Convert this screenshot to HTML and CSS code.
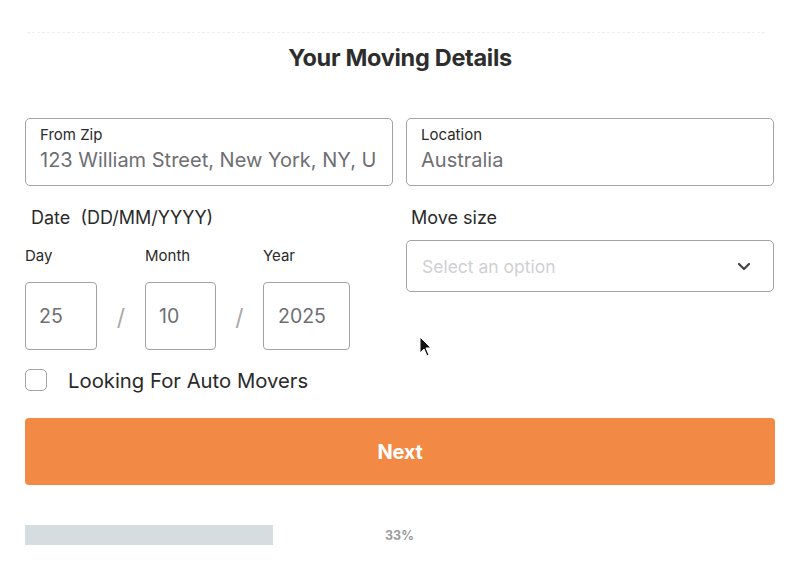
FILE: index.html
```html
<!DOCTYPE html>
<html>
<head>
<meta charset="utf-8">
<link rel="stylesheet" href="styles.css">
</head>
<body>
<div class="page">
  <div class="dash"></div>
  <h1 class="title">Your Moving Details</h1>
  <div class="grid">
    <div class="field">
      <div class="field-label">From Zip</div>
      <div class="field-value">123 William Street, New York, NY, U</div>
    </div>
    <div class="field">
      <div class="field-label">Location</div>
      <div class="field-value">Australia</div>
    </div>
    <div class="date-col">
      <div class="section-label date-label">Date&nbsp; (DD/MM/YYYY)</div>
      <div class="date-row">
        <div class="date-part">
          <div class="small-label">Day</div>
          <div class="date-box day">25</div>
        </div>
        <div class="slash">/</div>
        <div class="date-part">
          <div class="small-label">Month</div>
          <div class="date-box month">10</div>
        </div>
        <div class="slash">/</div>
        <div class="date-part">
          <div class="small-label">Year</div>
          <div class="date-box year">2025</div>
        </div>
      </div>
    </div>
    <div class="size-col">
      <div class="section-label">Move size</div>
      <div class="select">
        <span class="placeholder">Select an option</span>
        <svg class="chev" width="14" height="9" viewBox="0 0 14 9"><path d="M2 2l5 5 5-5" fill="none" stroke="#444" stroke-width="2.2" stroke-linecap="round" stroke-linejoin="round"/></svg>
      </div>
      <svg class="cursor" width="14" height="22" viewBox="0 0 14 22"><path d="M1 1v16l4-4 3 7 2-1-3-7h5z" fill="#111" stroke="#fff" stroke-width="1"/></svg>
    </div>
  </div>
  <label class="check">
    <span class="box"></span>
    <span class="check-text">Looking For Auto Movers</span>
  </label>
  <button class="next">Next</button>
  <div class="progress">
    <div class="bar"></div>
    <div class="pct">33%</div>
  </div>
</div>
</body>
</html>
```
FILE: styles.css
```css
* { box-sizing: border-box; }
html, body { margin: 0; padding: 0; background: #fff; }
body { font-family: Inter, "Noto Sans", Arial, sans-serif; color: #2b2b2b; }
.page { width: 800px; height: 574px; padding: 32px 25px 0 25px; position: relative; }
.dash { height: 0; border-top: 1px dashed #eeeeee; margin: 0 10px 0 2px; }
.title { margin: 10px 0 0; text-align: center; font-size: 23.5px; font-weight: 700; letter-spacing: -0.3px; color: #2d2d2d; line-height: 30px; }
.grid { display: grid; grid-template-columns: 368px 368px; column-gap: 13px; margin-top: 45px; }
.field { height: 68px; border: 1px solid #a3a3a3; border-radius: 5px; padding: 6px 14px 0 14px; overflow: hidden; }
.field-label { font-size: 15px; color: #2a2a2a; line-height: 19px; }
.field-value { font-size: 20px; color: #6e6e73; line-height: 26px; margin-top: 3px; white-space: nowrap; }
.section-label { font-size: 18px; color: #2a2a2a; line-height: 22px; margin-top: 21px; padding-left: 5px; }
.date-label { padding-left: 6px; }
.date-row { display: flex; align-items: flex-end; margin-top: 18px; }
.date-part { display: flex; flex-direction: column; }
.small-label { font-size: 15px; color: #2a2a2a; line-height: 18px; margin-bottom: 17px; }
.date-box { height: 68px; border: 1px solid #a3a3a3; border-radius: 4px; font-size: 19.5px; color: #6e6e73; display: flex; align-items: center; padding-left: 13px; }
.day { width: 72px; }
.month { width: 71px; }
.year { width: 87px; padding-left: 14px; }
.slash { width: 48px; height: 68px; display: flex; align-items: center; justify-content: center; font-size: 23px; color: #a8a8a8; padding-top: 4px; }
.slash + .date-part + .slash { width: 47px; }
.size-col { position: relative; }
.size-col .section-label { padding-left: 5px; }
.select { height: 52px; margin-top: 11px; border: 1px solid #a3a3a3; border-radius: 5px; display: flex; align-items: center; justify-content: space-between; padding: 0 22px 0 15px; }
.placeholder { font-size: 17.5px; color: #d0d0d4; }
.chev { display: block; }
.cursor { position: absolute; left: 13px; top: 150px; }
.check { display: flex; align-items: center; margin-top: 19px; height: 22px; }
.box { width: 22px; height: 22px; border: 1.5px solid #a3a3a3; border-radius: 5px; }
.check-text { margin-left: 21px; font-size: 20.3px; color: #2a2a2a; }
.next { display: block; width: 750px; height: 67px; margin-top: 27px; border: 0; border-radius: 4px; background: #f28a45; color: #fff; font-family: Inter, "Noto Sans", Arial, sans-serif; font-size: 20px; font-weight: 700; letter-spacing: -0.2px; }
.progress { display: flex; align-items: center; margin-top: 40px; height: 20px; }
.bar { width: 248px; height: 20px; background: #d6dde0; }
.pct { margin-left: 112px; font-size: 12.5px; font-weight: 700; color: #9a9a9a; }
```
